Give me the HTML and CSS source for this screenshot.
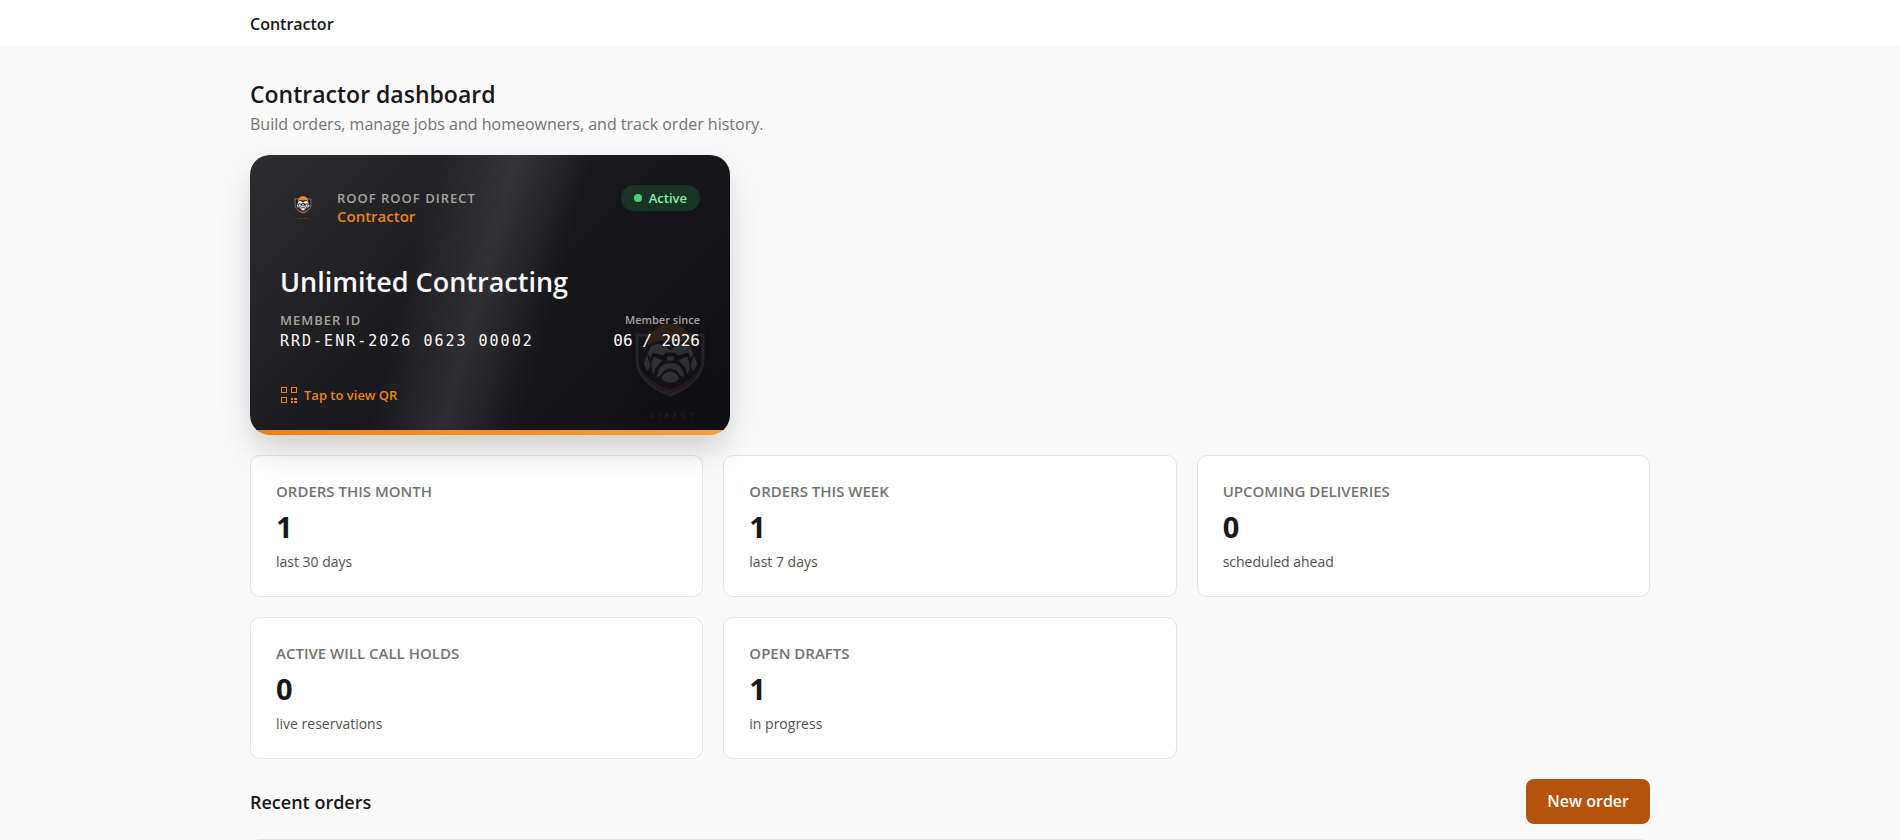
FILE: index.html
```html
<!DOCTYPE html>
<html lang="en">
<head>
	<meta charset="UTF-8">
	<meta name="viewport" content="width=device-width, initial-scale=1">
	<title>Contractor dashboard</title>
	<link rel="stylesheet" href="styles.css">
</head>
<body>
	<header class="topbar">
		<div class="container">
			<a class="brand" href="#">Contractor</a>
		</div>
	</header>

	<main class="container main">
		<h1 class="page-title">Contractor dashboard</h1>
		<p class="page-sub">Build orders, manage jobs and homeowners, and track order history.</p>

		<section class="member-card">
			<svg class="watermark" viewBox="0 0 72 100" aria-hidden="true">
				<g id="logo">
					<path class="logo-edge" d="M36 5 C44 11 57 13 69 12 V36 C69 53 55 65 36 72 C17 65 3 53 3 36 V12 C15 13 28 11 36 5Z"/>
					<path class="logo-trim" d="M3 40 C7 54 20 64 36 70 C52 64 65 54 69 40 C63 54 51 61 36 67 C21 61 9 54 3 40Z"/>
					<path class="logo-hat" d="M14 23 C15 9 25 1 36 1 C47 1 58 9 59 23 C51 17 44 17 36 19 C28 17 21 17 14 23Z"/>
					<!-- ears, brow, cheeks -->
					<path class="logo-face" d="M13 31 L9 41 L14 49 L17 42Z M60 31 L64 41 L59 49 L56 42Z"/>
					<path class="logo-face" d="M17 22 C25 19 31 21 36 27 C42 21 48 19 56 22 L60 31 L56 36 L54 30 L44 33 L41 30 H32 L29 33 L19 30 L17 36 L13 31Z"/>
					<path class="logo-face" d="M20 33 L29 37 L22 45 L20 53 C16 47 16 39 20 33Z M53 33 L44 37 L51 45 L53 53 C57 47 57 39 53 33Z"/>
					<!-- nose and muzzle -->
					<path class="logo-face" d="M32 33 H41 L40 38 H33Z"/>
					<path class="logo-face" d="M32 40 H41 C47 42 51 48 50 55 L46 53 L43 48 L36 46 L30 48 L27 53 L23 55 C22 48 26 42 32 40Z"/>
					<path class="logo-face" d="M36 48 L42 50 L46 55 C43 59 40 60 36 60 C33 60 29 59 27 55 L30 50Z"/>
					<path class="logo-trim" d="M24 62 L36 67 L49 61 L36 69Z"/>
					<text class="logo-text" x="39" y="95" text-anchor="middle">DIRECT</text>
				</g>
			</svg>
			<div class="card-head">
				<div class="logo-box">
					<svg class="logo" viewBox="0 0 72 100" aria-hidden="true"><use href="#logo"/></svg>
				</div>
				<div class="card-brand">
					<p class="company">ROOF ROOF DIRECT</p>
					<p class="role">Contractor</p>
				</div>
				<span class="status"><i class="dot"></i>Active</span>
			</div>
			<h2 class="member-name">Unlimited Contracting</h2>
			<div class="card-ids">
				<div>
					<p class="id-label id-caps">MEMBER ID</p>
					<p class="id-value member-id">RRD-ENR-2026 0623 00002</p>
				</div>
				<div class="since">
					<p class="id-label">Member since</p>
					<p class="id-value">06 / 2026</p>
				</div>
			</div>
			<button class="qr-btn" type="button">
				<svg width="18" height="18" viewBox="0 0 18 18" aria-hidden="true">
					<path fill="currentColor" fill-rule="evenodd" d="M1 1h6v6H1z M2 2v4h4V2z M11 1h6v6h-6z M12 2v4h4V2z M1 11h6v6H1z M2 12v4h4v-4z"/>
					<path fill="currentColor" d="M11 12h2v2h-2z M14 12h3v2h-3z M11 15h2v2h-2z M14 15h3v2h-3z"/>
				</svg>
				Tap to view QR
			</button>
		</section>

		<section class="stats">
			<div class="stat">
				<p class="stat-label">ORDERS THIS MONTH</p>
				<p class="stat-value">1</p>
				<p class="stat-note">last 30 days</p>
			</div>
			<div class="stat">
				<p class="stat-label">ORDERS THIS WEEK</p>
				<p class="stat-value">1</p>
				<p class="stat-note">last 7 days</p>
			</div>
			<div class="stat">
				<p class="stat-label">UPCOMING DELIVERIES</p>
				<p class="stat-value">0</p>
				<p class="stat-note">scheduled ahead</p>
			</div>
			<div class="stat">
				<p class="stat-label">ACTIVE WILL CALL HOLDS</p>
				<p class="stat-value">0</p>
				<p class="stat-note">live reservations</p>
			</div>
			<div class="stat">
				<p class="stat-label">OPEN DRAFTS</p>
				<p class="stat-value">1</p>
				<p class="stat-note">in progress</p>
			</div>
		</section>

		<div class="section-head">
			<h2 class="section-title">Recent orders</h2>
			<button class="btn" type="button">New order</button>
		</div>
		<div class="orders"></div>
	</main>
</body>
</html>
```
FILE: styles.css
```css
* {
	box-sizing: border-box;
}
body {
	margin: 0;
	background: #fafafa;
	color: #18181b;
	font-family: "Open Sans", "Noto Sans", sans-serif;
	font-size: 16px;
}
h1, h2, p {
	margin: 0;
}
button {
	font-family: inherit;
	border: none;
	cursor: pointer;
}
.container {
	max-width: 1400px;
	margin: 0 auto;
}

/* top bar */
.topbar {
	padding: 12px 0 9px;
	background: #fff;
}
.brand {
	display: block;
	line-height: 24px;
	font-weight: 600;
	color: inherit;
	text-decoration: none;
}

.main {
	padding-top: 32px;
}
.page-title {
	font-size: 23px;
	line-height: 34px;
	font-weight: 600;
}
.page-sub {
	line-height: 26px;
	color: #737373;
}

/* membership card */
.member-card {
	position: relative;
	z-index: 1;
	display: flex;
	flex-direction: column;
	max-width: 480px;
	min-height: 280px;
	margin: 18px 0 20px;
	padding: 30px;
	border-radius: 20px;
	overflow: hidden;
	color: #fafafa;
	background:
		linear-gradient(90deg, #ea8016, #f9a03f) bottom / 100% 5px no-repeat,
		linear-gradient(105deg, transparent 34%, rgba(255, 255, 255, 0.1) 48%, transparent 62%),
		linear-gradient(135deg, #2d2d30 0%, #18181c 50%, #0f0e13 100%);
	box-shadow: 0 16px 36px -4px rgba(0, 0, 0, 0.2);
}
.watermark {
	position: absolute;
	right: 24px;
	bottom: 12px;
	width: 72px;
	height: 100px;
	opacity: 0.13;
}
.card-head {
	display: flex;
	align-items: flex-start;
}
.logo-box {
	display: flex;
	align-items: center;
	justify-content: center;
	width: 46px;
	height: 46px;
	margin-right: 11px;
}
.logo {
	width: 18px;
	height: 24px;
}
.logo-edge {
	fill: #17171b;
	stroke: #9a9aa0;
	stroke-width: 3;
}
.logo-trim {
	fill: #c8602a;
}
.logo-hat {
	fill: #ee8a1c;
}
.logo-face {
	fill: #f4f4f5;
	stroke: #17171b;
	stroke-width: 1;
}
.logo-text {
	fill: #c8602a;
	font-size: 7px;
	font-weight: 700;
	letter-spacing: 4px;
}
.card-brand {
	flex: 1;
	padding-top: 4px;
}
.company {
	font-size: 13px;
	line-height: 18px;
	font-weight: 600;
	letter-spacing: 1px;
	color: #a8a29e;
}
.role {
	font-size: 15px;
	line-height: 18px;
	font-weight: 600;
	color: #ee8218;
}
.status {
	display: flex;
	align-items: center;
	gap: 7px;
	padding: 0 13px;
	border-radius: 13px;
	font-size: 13px;
	line-height: 26px;
	font-weight: 600;
	color: #86efac;
	background: #193325;
}
.dot {
	width: 8px;
	height: 8px;
	border-radius: 50%;
	background: #4fce7c;
}
.member-name {
	margin-top: 31px;
	font-size: 27px;
	line-height: 40px;
	font-weight: 600;
}
.card-ids {
	position: relative;
	display: flex;
	justify-content: space-between;
	margin-top: 8px;
}
.id-label {
	font-size: 11px;
	line-height: 20px;
	font-weight: 600;
	color: #a8a29e;
}
.id-caps {
	font-size: 13px;
	letter-spacing: 1px;
}
.id-value {
	font-family: "DejaVu Sans Mono", monospace;
	font-size: 16px;
	line-height: 22px;
}
.member-id {
	font-size: 15px;
	letter-spacing: 2px;
}
.since {
	text-align: right;
}
.qr-btn {
	display: flex;
	align-items: center;
	align-self: flex-start;
	gap: 6px;
	margin-top: auto;
	padding: 0;
	font-size: 13px;
	line-height: 20px;
	font-weight: 600;
	color: #ee8218;
	background: none;
}

/* stats */
.stats {
	display: grid;
	grid-template-columns: repeat(3, 1fr);
	gap: 20px;
}
.stat {
	padding: 24px 25px;
	border: 1px solid #e5e5e5;
	border-radius: 10px;
	background: #fff;
}
.stat-label {
	font-size: 15px;
	line-height: 22px;
	font-weight: 600;
	color: #737373;
}
.stat-value {
	font-size: 29px;
	line-height: 50px;
	font-weight: 700;
}
.stat-note {
	font-size: 14px;
	line-height: 20px;
	color: #525252;
}

/* recent orders */
.section-head {
	display: flex;
	align-items: center;
	justify-content: space-between;
	margin: 20px 0 15px;
}
.section-title {
	font-size: 18px;
	line-height: 28px;
	font-weight: 600;
}
.btn {
	padding: 0 21px;
	border-radius: 8px;
	font-size: 16px;
	line-height: 45px;
	font-weight: 600;
	color: #fff;
	background: #b45309;
}
.orders {
	min-height: 60px;
	border: 1px solid #e5e5e5;
	border-radius: 10px;
	background: #fff;
}
```
